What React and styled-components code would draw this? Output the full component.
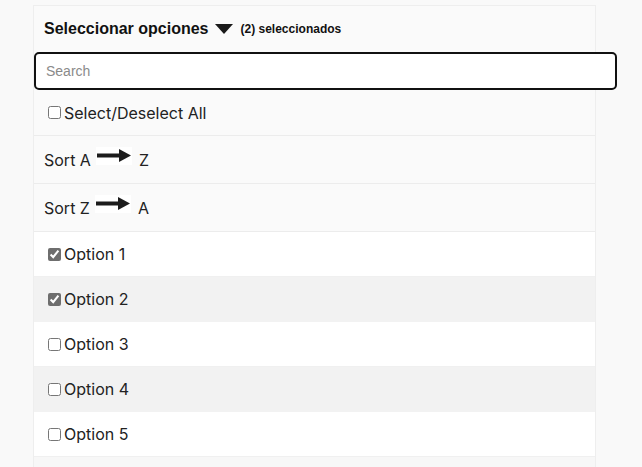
import React from "react";
import styled, { createGlobalStyle } from "styled-components";

const Global = createGlobalStyle`
  html, body { margin: 0; padding: 0; background: #f9f9f9; overflow: hidden; }
  * { box-sizing: border-box; }
`;

const Panel = styled.div`
  margin: 5px 0 0 33px;
  width: 563px;
  background: #fafafa;
  border: 1px solid #eeeeee;
  border-bottom: none;
`;

const Header = styled.div`
  height: 46px;
  display: flex;
  align-items: center;
  padding-left: 10px;
  font-family: "Liberation Sans", Arial, sans-serif;
  color: #111;
`;

const Title = styled.span`
  font-size: 16px;
  font-weight: 700;
`;

const Caret = styled.span`
  width: 0;
  height: 0;
  margin: 0 8px 0 6px;
  border-left: 9px solid transparent;
  border-right: 9px solid transparent;
  border-top: 10px solid #1a1a1a;
`;

const Count = styled.span`
  font-size: 12px;
  font-weight: 700;
`;

const SearchInput = styled.input`
  display: block;
  width: 583px;
  height: 38px;
  border: 2px solid #111;
  border-radius: 5px;
  background: #fff;
  padding: 0 10px;
  font-family: "Liberation Sans", Arial, sans-serif;
  font-size: 14px;
  color: #111;
  caret-color: #111;
  outline: none;
  &::placeholder { color: #8a8a8a; }
`;

const Row = styled.div`
  height: ${(p) => p.$h || 45}px;
  display: flex;
  align-items: center;
  padding-left: ${(p) => (p.$check ? 14 : 10)}px;
  background: ${(p) => p.$bg || "transparent"};
  border-bottom: 1px solid ${(p) => p.$line || "#ececec"};
  font-family: Inter, "Noto Sans", sans-serif;
  font-size: 16px;
  color: #222;
`;

const Check = styled.input`
  width: 13px;
  height: 13px;
  margin: 0 3px 0 0;
  accent-color: #6e6e6e;
`;

const ArrowBox = styled.span`
  display: inline-flex;
  align-items: center;
  justify-content: center;
  width: 36px;
  height: 18px;
  margin: 0 7px 0 5px;
  background: #fff;
  position: relative;
  top: -4px;
`;

const Arrow = () => (
  <svg width="34" height="13" viewBox="0 0 34 13">
    <rect x="0" y="4.5" width="24" height="4" fill="#1c1c1c" />
    <polygon points="22,0 34,6.5 22,13" fill="#1c1c1c" />
  </svg>
);

const options = [
  { label: "Option 1", checked: true },
  { label: "Option 2", checked: true },
  { label: "Option 3", checked: false },
  { label: "Option 4", checked: false },
  { label: "Option 5", checked: false },
];

export default function App() {
  return (
    <>
      <Global />
      <Panel>
        <Header>
          <Title>Seleccionar opciones</Title>
          <Caret />
          <Count>(2) seleccionados</Count>
        </Header>
        <SearchInput placeholder="Search" autoFocus />
        <Row $check $h={46}>
          <Check type="checkbox" readOnly />
          Select/Deselect All
        </Row>
        <Row $h={48}>
          Sort A<ArrowBox><Arrow /></ArrowBox>Z
        </Row>
        <Row $h={48}>
          Sort Z<ArrowBox><Arrow /></ArrowBox>A
        </Row>
        {options.map((o, i) => (
          <Row
            key={o.label}
            $check
            $bg={i % 2 === 0 ? "#ffffff" : "#f2f2f2"}
            $line={i % 2 === 0 ? "#f0f0f0" : "#f2f2f2"}
          >
            <Check type="checkbox" defaultChecked={o.checked} />
            {o.label}
          </Row>
        ))}
        <Row $bg="#f7f7f7" $line="#f7f7f7" />
      </Panel>
    </>
  );
}
